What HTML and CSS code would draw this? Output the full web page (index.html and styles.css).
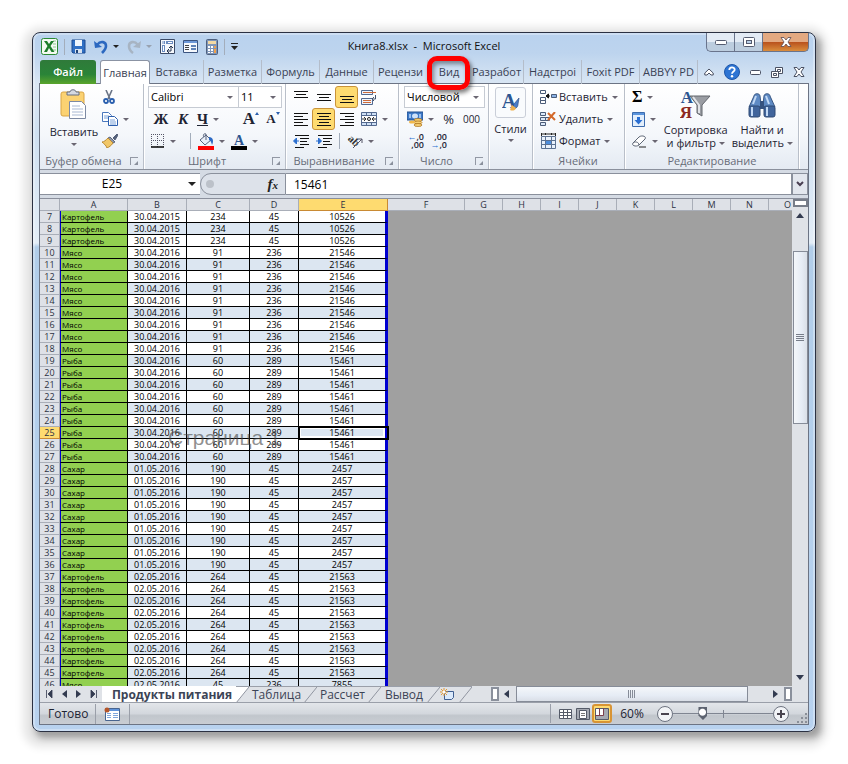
FILE: index.html
```
<!DOCTYPE html>
<html lang="ru">
<head>
  <meta charset="UTF-8">
  <meta name="viewport" content="width=device-width, initial-scale=1.0">
  <title>Книга8.xlsx - Microsoft Excel</title>
  <link rel="stylesheet" href="styles.css">
</head>
<body>
<div class="window">

  <header class="titlebar">
    <div class="quick">
      <svg width="17" height="17" viewBox="0 0 17 17"><rect x=".5" y=".5" width="16" height="16" rx="2" fill="#f4faf2" stroke="#2c8a35"/><path d="M12 3h3M12 6h3M12 9h3M12 12h3" stroke="#8dc78f"/><path d="M3 3h3l2 3 2-3h3L9.500 8l4 6h-3L8 10l-2 4H3l3.500-6z" fill="#1d7d2a"/></svg>
      <span class="divider"></span>
      <button class="tool" aria-label="Сохранить"><svg width="15" height="15" viewBox="0 0 15 15"><path d="M1 1h13v13H2l-1-1z" fill="#2f6fc4" stroke="#1d4a91"/><path d="M4 1h7v6H4z" fill="#eef5fd"/><path d="M4 10h7v4H4z" fill="#d8e2ef"/><path d="M5 11h2v3H5z" fill="#1f4378"/></svg></button>
      <button class="tool undo" aria-label="Отменить"><svg width="14" height="15" viewBox="0 0 14 15"><path d="M3 6c4-5 9-3 9 1 0 3-2 5-4 7" fill="none" stroke="#2b68c0" stroke-width="2.600"/><path d="M0 2l1 7 7-1z" fill="#2b68c0"/></svg><i class="caret dark"></i></button>
      <button class="tool undo" aria-label="Вернуть"><svg width="14" height="15" viewBox="0 0 14 15"><path d="M11 6C7 1 2 3 2 7c0 3 1 5 4 7" fill="none" stroke="#a7b4c3" stroke-width="2.600"/><path d="M14 2l-1 7-7-1z" fill="#a7b4c3"/></svg><i class="caret pale"></i></button>
      <button class="tool" aria-label="Сводная таблица"><svg width="15" height="15" viewBox="0 0 15 15"><path d="M.5.500h14v14H.5z" fill="#f6f9fd" stroke="#3b4a66"/><path d="M2 2h3v3H2zM6 2h7v3H6zM2 6h3v7H2z" fill="#6b8cc0"/><path d="M3 2v3M8 3.500h4M3.500 7v5" stroke="#fff"/><path d="M8 12h3V7M9 9l2-2 2 2M9 10l-2 2 2 2" fill="none" stroke="#26354f"/></svg></button>
      <button class="tool" aria-label="Форма"><svg width="15" height="13" viewBox="0 0 15 13"><path d="M.5.500h14v12H.5z" fill="#f6f9fd" stroke="#3b5480"/><path d="M1 1h13v2H1z" fill="#6d98d8"/><path d="M2 5.500h4M2 7.500h4M2 9.500h4" stroke="#444"/><path d="M8 5h5v2H8zM8 8h5v2H8z" fill="#5f82b7"/></svg></button>
      <button class="tool" aria-label="Калькулятор"><svg width="12" height="16" viewBox="0 0 12 16"><rect x=".5" y=".5" width="11" height="15" rx="1" fill="#7f96b9" stroke="#4e607e"/><path d="M2 2h8v3H2z" fill="#f3d9a4"/><path d="M2 7h2v2H2zM5 7h2v2H5zM2 10h2v2H2zM5 10h2v2H5zM2 13h2v1H2zM5 13h2v1H5z" fill="#fff"/><path d="M8 7h2v2H8zM8 10h2v4H8z" fill="#f0a04a"/></svg></button>
      <span class="divider"></span>
      <button class="tool more" aria-label="Настройка панели"><svg width="7" height="7" viewBox="0 0 7 7"><path d="M0 .5h7" stroke="#222"/><path d="M0 3h7L3.500 7z" fill="#222"/></svg></button>
    </div>
    <h1>Книга8.xlsx &nbsp;-&nbsp; Microsoft Excel</h1>
    <div class="winbuttons">
      <button aria-label="Свернуть"><svg width="12" height="5"><rect x=".5" y=".5" width="11" height="4" rx="1" fill="#fff" stroke="#555c70"/></svg></button>
      <button aria-label="Развернуть"><svg width="12" height="10"><rect x=".5" y=".5" width="11" height="9" rx="1" fill="#fff" stroke="#555c70"/><rect x="3.500" y="3.500" width="5" height="3" fill="#b9cfe8" stroke="#555c70"/></svg></button>
      <button class="close" aria-label="Закрыть"><svg width="12" height="10" viewBox="0 0 12 10"><path d="M1 .5h3L6 3l2-2.500h3L8 5l3 4.500H8L6 7 4 9.500H1L4 5z" fill="#fff" stroke="#5d4a50" stroke-width=".8"/></svg></button>
    </div>
  </header>

  <nav class="tabs">
    <button class="file">Файл</button>
    <button class="active">Главная</button>
    <button class="t1">Вставка</button>
    <button class="t2">Разметка</button>
    <button class="t2">Формуль</button>
    <button class="t1">Данные</button>
    <button class="t1">Рецензи</button>
    <button class="view">Вид</button>
    <button class="t1">Разработ</button>
    <button class="t2">Надстроі</button>
    <button class="t2">Foxit PDF</button>
    <button class="t2">ABBYY PD</button>
    <div class="tabtools">
      <svg width="10" height="8" viewBox="0 0 10 8"><path d="M.8 5L5 1l4.200 4v2H7L5 5 3 7H.8z" fill="#fff" stroke="#4a5163"/></svg>
      <svg width="16" height="16" viewBox="0 0 16 16"><circle cx="8" cy="8" r="7.500" fill="#2d74d3" stroke="#1d56a8"/><path d="M5.300 6c0-3.500 5.400-3.300 5.400-.3C10.700 7.500 8 7.500 8 9.800" fill="none" stroke="#fff" stroke-width="1.800"/><circle cx="8" cy="12.300" r="1.200" fill="#fff"/></svg>
      <svg width="11" height="5"><rect x=".5" y=".5" width="10" height="4" rx="1" fill="#fff" stroke="#4a5163"/></svg>
      <svg width="12" height="11" viewBox="0 0 12 11"><path d="M4.500.5h7v6h-7z" fill="#fff" stroke="#4a5163"/><path d="M6.500 2.500h3v2h-3z" fill="none" stroke="#4a5163"/><path d="M.5 4.500h7v6h-7z" fill="#fff" stroke="#4a5163"/><path d="M2.500 6.500h3v2h-3z" fill="none" stroke="#4a5163"/></svg>
      <svg width="12" height="10" viewBox="0 0 12 10"><path d="M1 .5h3L6 3l2-2.500h3L8 5l3 4.500H8L6 7 4 9.500H1L4 5z" fill="#fff" stroke="#4a5163"/></svg>
    </div>
  </nav>

  <main class="client">
    <section class="ribbon">
      <div class="group clipboard">
        <div class="body">
          <button class="big paste">
            <svg width="28" height="31" viewBox="0 0 28 31"><rect x="1" y="3" width="23" height="24" rx="2" fill="#fbd272" stroke="#d9a545"/><path d="M7 6V3h3c0-3 6-3 6 0h3v3z" fill="#d5d9e2" stroke="#666f80"/><path d="M9.500 12.500h12l4 4v13h-16z" fill="#fff" stroke="#7d8aa3"/><path d="M12 17h8M12 20h11M12 23h11M12 26h11" stroke="#a9b9d3"/></svg>
            <span>Вставить</span><i class="caret"></i>
          </button>
          <div class="stack">
            <button class="tool w38" aria-label="Вырезать"><svg width="14" height="14" viewBox="0 0 14 14"><path d="M4 0l4 9M10 0L6 9" stroke="#6a7486" stroke-width="1.600"/><circle cx="4" cy="11" r="2" fill="none" stroke="#2a5fae" stroke-width="1.800"/><circle cx="10" cy="11" r="2" fill="none" stroke="#2a5fae" stroke-width="1.800"/></svg></button>
            <button class="tool w38" aria-label="Копировать"><svg width="16" height="14" viewBox="0 0 16 14"><path d="M.5.500h6l3 3v6h-9z" fill="#fff" stroke="#4a78bd"/><path d="M2 4h5M2 6h5" stroke="#7ba3da"/><path d="M6.500 4.500h6l3 3v6h-9z" fill="#fff" stroke="#2c5fae"/><path d="M8 8h5M8 10h6M8 12h6" stroke="#7ba3da"/></svg><i class="caret"></i></button>
            <button class="tool w38" aria-label="Формат по образцу"><svg width="16" height="14" viewBox="0 0 16 14"><path d="M11 4l4-4 1 1-3 5z" fill="#54607a" stroke="#54607a"/><path d="M8 3l5 5-2 1-5-5z" fill="#8b95a8" stroke="#5a647a"/><path d="M6 4l5 5c-2 3-4 4-6 5-1-3-3-4-5-6 2 0 4-2 6-4z" fill="#f1c768" stroke="#b98934"/></svg></button>
          </div>
        </div>
        <footer>Буфер обмена<i class="launcher"></i></footer>
      </div>

      <div class="group font">
        <div class="body stack">
          <div class="row combos">
            <label class="combo face"><select aria-label="Шрифт"><option>Calibri</option></select></label>
            <label class="combo size"><select aria-label="Размер шрифта"><option>11</option></select></label>
          </div>
          <div class="row letters">
            <button class="tool serif">Ж</button>
            <button class="tool serif italic">К</button>
            <button class="tool serif w38"><u>Ч</u><i class="caret"></i></button>
            <span class="divider"></span>
            <button class="tool serif grow">A<i class="up"></i></button>
            <button class="tool serif shrink">A<i class="down"></i></button>
          </div>
          <div class="row">
            <button class="tool w38" aria-label="Границы"><svg width="14" height="14" viewBox="0 0 14 14"><path d="M0 .5h14M.5 0v13M6.500 0v13M12.500 0v13M0 6.500h14" stroke="#556" stroke-dasharray="1 1"/><path d="M0 13h13" stroke="#111" stroke-width="1.600"/></svg><i class="caret"></i></button>
            <span class="divider"></span>
            <button class="tool w33" aria-label="Цвет заливки"><svg width="16" height="17" viewBox="0 0 16 17"><path d="M2 7l6-5 5 5-6 5z" fill="#e8eef7" stroke="#56637c"/><path d="M8 7V1c-3-1-3 2-2 3" fill="none" stroke="#56637c"/><path d="M11 4c4 0 5 4 3 8-1-3-1-4-3-5z" fill="#2c69c4"/><path d="M0 13h16v4H0z" fill="#f00"/></svg><i class="caret"></i></button>
            <button class="tool w33" aria-label="Цвет текста"><svg width="16" height="17" viewBox="0 0 16 17"><text x="8" y="12" text-anchor="middle" class="letter">A</text><path d="M0 13h16v4H0z" fill="#000"/></svg><i class="caret"></i></button>
          </div>
        </div>
        <footer>Шрифт<i class="launcher"></i></footer>
      </div>

      <div class="group align">
        <div class="body stack">
          <div class="row">
            <button class="tool w23"><svg width="14" height="14"><path d="M0 1.500h14M2 4.500h10M0 7.500h14" class="ln"/></svg></button>
            <button class="tool w23"><svg width="14" height="14"><path d="M0 4.500h14M2 7.500h10M0 10.500h14" class="ln"/></svg></button>
            <button class="tool w23 on"><svg width="14" height="14"><path d="M0 6.500h14M2 9.500h10M0 12.500h14" class="ln"/></svg></button>
            <button class="tool w33"><svg width="16" height="15" viewBox="0 0 16 15"><path d="M.5.500h11v4H.5zM.5 8.500h11v6H.5z" fill="#eef4fc" stroke="#53698f"/><path d="M2 2.500h13M2 10.500h8M2 12.500h8" stroke="#cc6a3a"/><path d="M14.500 5v4h-3m1.500-2l-2 2 2 2" fill="none" stroke="#44546f"/></svg></button>
          </div>
          <div class="row">
            <button class="tool w23"><svg width="14" height="13"><path d="M0 .5h14M0 3.500h9M0 6.500h14M0 9.500h9M0 12.500h14" class="ln"/></svg></button>
            <button class="tool w23 on"><svg width="14" height="13"><path d="M0 .5h14M2 3.500h10M0 6.500h14M2 9.500h10M0 12.500h14" class="ln"/></svg></button>
            <button class="tool w23"><svg width="14" height="13"><path d="M0 .5h14M5 3.500h9M0 6.500h14M5 9.500h9M0 12.500h14" class="ln"/></svg></button>
            <button class="tool w33"><svg width="16" height="14" viewBox="0 0 16 14"><path d="M.5.500h15v13H.5zM5.500.500v3M10.500.500v3M5.500 10v3.500M10.500 10v3.500M.5 3.500h15M.5 10.500h15" fill="#cfe0f5" stroke="#53698f"/><path d="M1 4h14v6H1z" fill="#fff"/><path d="M1 7h4M11 7h4M3 5l2 2-2 2M13 5l-2 2 2 2" fill="none" stroke="#333"/><circle cx="8" cy="7" r="1.500" fill="none" stroke="#222"/></svg><i class="caret"></i></button>
          </div>
          <div class="row">
            <button class="tool w23"><svg width="16" height="13" viewBox="0 0 16 13"><path d="M2 .5h14M7 3.500h9M7 6.500h7M7 9.500h9M2 12.500h9" class="ln"/><path d="M6 6H2M3.500 3L.5 6l3 3z" fill="#2b6fd0" stroke="#2b6fd0"/></svg></button>
            <button class="tool w23"><svg width="16" height="13" viewBox="0 0 16 13"><path d="M2 .5h14M7 3.500h9M7 6.500h7M7 9.500h9M2 12.500h9" class="ln"/><path d="M0 6h3M2.500 3l3 3-3 3z" fill="#2b6fd0" stroke="#2b6fd0"/></svg></button>
            <span class="divider"></span>
            <button class="tool w38" aria-label="Ориентация"><svg width="16" height="15" viewBox="0 0 16 15"><text x="0" y="10" transform="rotate(45 6 8)" class="ab">ab</text><path d="M6 14l9-9m-4 0h4v4" fill="none" stroke="#556"/></svg><i class="caret"></i></button>
          </div>
        </div>
        <footer>Выравнивание<i class="launcher"></i></footer>
      </div>

      <div class="group number">
        <div class="body stack">
          <div class="row combos">
            <label class="combo format"><select aria-label="Числовой формат"><option>Числовой</option></select></label>
          </div>
          <div class="row">
            <button class="tool w33" aria-label="Финансовый формат"><svg width="16" height="16" viewBox="0 0 16 16"><path d="M0 1h16v8H0z" fill="#3c78c6" stroke="#245090"/><ellipse cx="8" cy="5" rx="3" ry="2.500" fill="#cfe2fa"/><path d="M2 3h2v4H2zM12 3h2v4h-2z" fill="#9cc0ee"/><ellipse cx="11" cy="9" rx="4" ry="1.500" fill="#f7cf72" stroke="#a86e1c" stroke-width=".7"/><ellipse cx="11" cy="11.500" rx="4" ry="1.500" fill="#f7cf72" stroke="#a86e1c" stroke-width=".7"/><ellipse cx="11" cy="14" rx="4" ry="1.500" fill="#f7cf72" stroke="#a86e1c" stroke-width=".7"/><ellipse cx="5" cy="11" rx="3" ry="1.500" fill="#f2b94b"/></svg><i class="caret"></i></button>
            <button class="tool w23 pct">%</button>
            <button class="tool w23 zeros">000</button>
          </div>
          <div class="row">
            <button class="tool w23 dec"><span class="blue">←</span>,0<br>,00</button>
            <button class="tool w23 dec">,00<br><span class="blue">→</span>,0</button>
          </div>
        </div>
        <footer>Число<i class="launcher"></i></footer>
      </div>

      <div class="group styles">
        <button class="big">
          <span class="frame"><svg width="18" height="20" viewBox="0 0 18 20"><text x="7" y="15" text-anchor="middle" class="letter big-a">A</text><path d="M17 5l-5 6-2 5c4 0 6-2 6-5z" fill="#4a7cc7" stroke="#2d4f88" stroke-width=".7"/><path d="M10 12l4 3c-1 3-4 3-6 2z" fill="#efb14e"/></svg></span>
          <span>Стили</span><i class="caret"></i>
        </button>
      </div>

      <div class="group cells">
        <div class="body stack">
          <button class="tool wide"><svg width="17" height="14" viewBox="0 0 17 14"><path d="M.5.500h5v3h-5zM.5 7.500h5v3h-5zM.5 10.500h5v3h-5z" fill="#fff" stroke="#4b5c78"/><path d="M11.500 4.500h5v3h-5z" fill="#8bb2e6" stroke="#4b5c78"/><path d="M6 6h4M8.500 4v4L6 6z" fill="#111" stroke="#111"/></svg><span>Вставить</span><i class="caret"></i></button>
          <button class="tool wide"><svg width="17" height="14" viewBox="0 0 17 14"><path d="M.5.500h5v3h-5zM.5 5.500h5v3h-5zM.5 10.500h5v3h-5zM5.500 5.500h4v3h-4z" fill="#dbe8f8" stroke="#4b5c78"/><path d="M8 1l7 7M15 0L8 8" stroke="#d4692a" stroke-width="2"/></svg><span>Удалить</span><i class="caret"></i></button>
          <button class="tool wide"><svg width="17" height="16" viewBox="0 0 17 16"><path d="M1.500 3.500h14v12h-14zM1.500 7.500h14M1.500 11.500h14M5.500 3.500v12M11.500 3.500v12" fill="#eaf2fc" stroke="#5d7291"/><path d="M6 8h5v3H6z" fill="#4f8edc"/><path d="M1 1h14M1.500 0v3M15.500 0v3M5.500 0v2M11.500 0v2" stroke="#222"/></svg><span>Формат</span><i class="caret"></i></button>
        </div>
        <footer>Ячейки</footer>
      </div>

      <div class="group editing">
        <div class="body">
          <div class="stack">
            <button class="tool w33 sigma">Σ<i class="caret"></i></button>
            <button class="tool w33" aria-label="Заполнить"><svg width="13" height="15" viewBox="0 0 13 15"><path d="M.5.500h12v14H.5z" fill="#e3effc" stroke="#3c6cae"/><path d="M1 1h11v2H1z" fill="#5b95dd"/><path d="M5 5h3v3h2.500l-4 4.500-4-4.500H5z" fill="#2a6fd2"/></svg><i class="caret"></i></button>
            <button class="tool w33" aria-label="Очистить"><svg width="15" height="13" viewBox="0 0 15 13"><path d="M1 8l6-6c2-2 8-1 6 2l-6 6c-2 2-8 1-6-2z" fill="#fff" stroke="#5d6675"/><path d="M1 8c2-2 6-1 6 2" fill="none" stroke="#5d6675"/><path d="M7 12h7" stroke="#222"/></svg><i class="caret"></i></button>
          </div>
          <button class="big sort">
            <svg width="31" height="29" viewBox="0 0 31 29"><text x="7" y="13" text-anchor="middle" class="letter az">A</text><text x="6" y="28" text-anchor="middle" class="letter az red">Я</text><path d="M10 6h20l-8 9v11l-5-3v-8z" fill="#9a9da3" stroke="#63666d"/><path d="M13 7l6 8v8" fill="none" stroke="#e2e4e8" stroke-width="2"/></svg>
            <span>Сортировка<br>и фильтр <i class="caret"></i></span>
          </button>
          <button class="big find">
            <svg width="28" height="27" viewBox="0 0 28 27"><path d="M6 4c0-3 6-3 6 0l1 8-1 4-11-1z" fill="#5e8ac4" stroke="#3a5884"/><path d="M16 4c0-3 6-3 6 0l5 11-11 1-1-4z" fill="#5e8ac4" stroke="#3a5884"/><rect x="1" y="14" width="11" height="11" rx="2" fill="#41659c" stroke="#2f4a75"/><rect x="16" y="14" width="11" height="11" rx="2" fill="#41659c" stroke="#2f4a75"/><path d="M12 9h4v8h-4z" fill="#35527f"/><path d="M4 15v9M19 15v9M8 4L5 12M18 4l3 8" stroke="#c3daf6" stroke-width="2"/></svg>
            <span>Найти и<br>выделить <i class="caret"></i></span>
          </button>
        </div>
        <footer>Редактирование</footer>
      </div>
    </section>

    <section class="formulabar">
      <label class="namebox"><input type="text" value="E25" aria-label="Имя"><i class="caret dark wide-caret"></i></label>
      <div class="fx"><span class="knob"></span><em>f<small>x</small></em></div>
      <input class="formula" type="text" value="15461" aria-label="Строка формул">
      <button class="expand" aria-label="Развернуть строку формул"><svg width="8" height="6"><path d="M1 1l3 3 3-3" fill="none" stroke="#4a3f52" stroke-width="2"/></svg></button>
    </section>

    <section class="sheet">
      <div class="grid">
        <table>
          <colgroup><col class="c0"><col class="ca"><col class="cb"><col class="cc"><col class="cd"><col class="ce"><col class="cf"><col span="9" class="cx"></colgroup>
          <thead>
            <tr><th class="corner"></th><th>A</th><th>B</th><th>C</th><th>D</th><th class="sel">E</th><th>F</th><th>G</th><th>H</th><th>I</th><th>J</th><th>K</th><th>L</th><th>M</th><th>N</th><th>O</th></tr>
          </thead>
          <tbody id="rows"></tbody>
        </table>
        <div class="watermark">Страница 1</div>
      </div>
      <div class="vscroll">
        <span class="split"></span>
        <span class="arrow arrow-up"></span>
        <span class="vthumb"></span>
        <span class="arrow arrow-down"></span>
      </div>
    </section>

    <section class="sheetbar">
      <div class="navs">
        <svg width="7" height="8"><path d="M.5 0v8M6 0v8L2 4z" fill="#333b50" stroke="#333b50" stroke-width=".8"/></svg>
        <svg width="5" height="8"><path d="M5 0v8L0 4z" fill="#333b50"/></svg>
        <svg width="5" height="8"><path d="M0 0v8l5-4z" fill="#333b50"/></svg>
        <svg width="7" height="8"><path d="M6.500 0v8M1 0v8l4-4z" fill="#333b50" stroke="#333b50" stroke-width=".8"/></svg>
      </div>
      <button class="sheettab s1">Продукты питания</button>
      <svg class="slant" width="13" height="16"><path d="M0 0h13L0 16z" fill="#fff"/><path d="M0 16L13 0" stroke="#9095a0"/></svg>
      <button class="sheettab s2">Таблица</button>
      <svg class="slant" width="13" height="16"><path d="M0 16L13 0" stroke="#9095a0"/></svg>
      <button class="sheettab s3">Рассчет</button>
      <svg class="slant" width="13" height="16"><path d="M0 16L13 0" stroke="#9095a0"/></svg>
      <button class="sheettab s4">Вывод</button>
      <svg class="slant" width="13" height="16"><path d="M0 16L13 0" stroke="#9095a0"/></svg>
      <button class="sheettab s5" aria-label="Вставить лист"><svg width="15" height="13" viewBox="0 0 15 13"><path d="M4.500 3.500h9v6l-2 2h-7z" fill="#dceafb" stroke="#3f5f92"/><path d="M4 0v8M0 4h8M1 1l6 6M7 1L1 7" stroke="#e49a35"/><circle cx="4" cy="4" r="1.500" fill="#fff"/></svg></button>
      <svg class="slant" width="13" height="16"><path d="M0 16L13 0" stroke="#9095a0"/></svg>
      <div class="hscroll">
        <span class="hsplit"></span>
        <span class="arrow arrow-left"></span>
        <span class="hthumb"></span>
        <span class="arrow arrow-right"></span>
        <span class="hsplit"></span>
      </div>
    </section>

    <footer class="status">
      <span class="ready">Готово</span>
      <span class="macro"><svg width="16" height="14" viewBox="0 0 16 14"><path d="M1.500 1.500h14v12h-14z" fill="#fff" stroke="#49658f"/><path d="M2 2h13v2H2z" fill="#5f93da"/><path d="M3 6.500h4M3 8.500h4M3 10.500h4M9 6.500h5M9 8.500h5M9 10.500h5" stroke="#7fa6dc"/><circle cx="3" cy="3" r="2.500" fill="#b5572b"/></svg></span>
      <div class="views">
        <button aria-label="Обычный"><svg width="13" height="10"><path d="M.5.500h12v9H.5zM.5 3.500h12M.5 6.500h12M4.500.500v9M8.500.500v9" fill="#fff" stroke="#555b68"/></svg></button>
        <button aria-label="Разметка страницы"><svg width="14" height="12"><path d="M.5.500h13v11H.5z" fill="#a5a9b2" stroke="#555b68"/><path d="M3.500 2.500h7v8h-7z" fill="#fff" stroke="#555b68"/><path d="M5 5.500h4M5 7.500h4" stroke="#777"/></svg></button>
        <button class="on" aria-label="Страничный режим"><svg width="14" height="12"><path d="M.5.500h13v11H.5z" fill="#a5a9b2" stroke="#555b68"/><path d="M1 1h3v6H1zM5 1h3v6H5z" fill="#fff"/><path d="M4.500 0v7.500M8.500 0v7.500H0" fill="none" stroke="#7b3f4d"/></svg></button>
      </div>
      <button class="percent">60%</button>
      <button class="round minus" aria-label="Уменьшить"><svg width="8" height="8"><path d="M0 4h8" stroke="#4a4550" stroke-width="2"/></svg></button>
      <input class="zoom" type="range" min="0" max="100" value="28" aria-label="Масштаб">
      <button class="round plus" aria-label="Увеличить"><svg width="8" height="8"><path d="M0 4h8M4 0v8" stroke="#4a4550" stroke-width="2"/></svg></button>
      <svg class="grip" width="10" height="10"><path d="M8 0h2v2H8zM4 4h2v2H4zM8 4h2v2H8zM0 8h2v2H0zM4 8h2v2H4zM8 8h2v2H8z" fill="#8a8f98"/></svg>
    </footer>
  </main>
</div>
<script src="script.js"></script>
</body>
</html>
```

FILE: styles.css
```
*,
*::after {
  box-sizing: border-box;
}
body {
  margin: 0;
  padding: 32px;
  height: 100vh;
  background: #fff;
  font-family: "Open Sans", "Noto Sans", sans-serif;
  font-size: 12px;
  line-height: 14px;
  color: #1e2433;
}
button {
  padding: 0;
  border: none;
  background: none;
  font: inherit;
  color: inherit;
}
svg {
  display: block;
  flex: none;
}
.window {
  display: flex;
  flex-direction: column;
  height: 100%;
  padding: 0 6px 6px;
  border: 1px solid #2b3142;
  border-radius: 8px;
  background: linear-gradient(#b9d2ee 0, #bdd4ee 20px, #dbe7f4 52px, #cfe0f1 100px, #e3edf7 210px, #b1cde9 214px, #b8d2ef 100%);
  box-shadow: 0 0 0 2px rgba(255,255,255,.3) inset, 4px 5px 6px 1px rgba(0,0,0,.3), 1px 5px 8px 10px rgba(0,0,0,.1);
}

/* title bar */
.titlebar {
  display: grid;
  grid-template-columns: 1fr auto 1fr;
  height: 27px;
  flex: none;
}
.titlebar h1 {
  margin: 0;
  padding-top: 6px;
  font-size: 11px;
  font-weight: normal;
  color: #111;
}
.quick {
  display: flex;
  align-items: center;
  gap: 8px;
  padding-left: 2px;
}
.quick .divider {
  margin: 0 -2px;
}
.quick .undo {
  gap: 5px;
}
.quick .tool {
  height: 20px;
}
.divider {
  width: 1px;
  height: 16px;
  margin: 0 4px;
  background: #a3adbb;
}
.winbuttons {
  display: flex;
  justify-self: end;
  height: 19px;
}
.winbuttons button {
  display: flex;
  align-items: center;
  justify-content: center;
  width: 28px;
  border: 1px solid #69748c;
  border-top: none;
  border-right: none;
  background: linear-gradient(#e3ebf5 50%, #bccddf 50%);
}
.winbuttons button:first-child {
  border-radius: 0 0 0 5px;
}
.winbuttons .close {
  width: 47px;
  border-right: 1px solid #69748c;
  border-radius: 0 0 5px 0;
  background: linear-gradient(#e3a981 50%, #b9501c 50%, #d98d3c);
}

/* tabs */
.tabs {
  display: flex;
  height: 24px;
  flex: none;
  margin-bottom: -1px;
  padding-left: 1px;
  font-size: 11px;
  color: #3a4254;
  z-index: 1;
}
.tabs button {
  flex: none;
  overflow: hidden;
  white-space: nowrap;
  border-right: 1px solid #b4bdca;
}
.tabs .file {
  width: 56px;
  margin-right: 4px;
  border: none;
  border-radius: 3px 3px 0 0;
  background: linear-gradient(#2f7a3a, #2a8438 60%, #5aa52c);
  color: #fff;
  font-weight: 600;
}
.tabs .active {
  width: 50px;
  border: 1px solid #8b93a3;
  border-bottom: none;
  border-radius: 3px 3px 0 0;
  background: #fff;
}
.tabs .t1 {
  width: 54px;
}
.tabs .t2 {
  width: 58px;
}
.tabs .view {
  position: relative;
  width: 42px;
  overflow: visible;
  border: none;
}
.tabs .view::after {
  content: "";
  position: absolute;
  top: -4px;
  left: -1px;
  width: 43px;
  height: 34px;
  border: 5px solid #f00;
  border-radius: 10px;
  box-shadow: 2px 3px 4px rgba(0,0,0,.5), inset 2px 3px 4px rgba(0,0,0,.4);
}
.tabtools {
  display: flex;
  flex: 1;
  align-items: center;
  justify-content: space-between;
  padding: 0 4px 0 6px;
}

/* ribbon */
.client {
  display: flex;
  flex-direction: column;
  flex: 1;
  min-height: 0;
  border: 1px solid #6c7484;
}
.ribbon {
  display: flex;
  flex: none;
  height: 86px;
  border-bottom: 1px solid #8a909c;
  background: linear-gradient(#fff, #f4f7fb 60%, #e4eaf2);
}
.group {
  display: flex;
  flex-direction: column;
  padding: 2px 3px 0;
  border-right: 1px solid #b9bfc9;
  box-shadow: 1px 0 #fff;
}
.clipboard {
  width: 104px;
}
.font {
  width: 142px;
}
.align {
  width: 113px;
}
.number {
  width: 90px;
}
.styles {
  width: 44px;
}
.cells {
  width: 92px;
}
.editing {
  width: 174px;
}
.body {
  display: flex;
  height: 68px;
}
.stack {
  display: flex;
  flex-direction: column;
}
.row {
  display: flex;
  align-items: center;
  height: 22px;
}
.group footer {
  position: relative;
  padding-right: 16px;
  text-align: center;
  white-space: nowrap;
  font-size: 11px;
  line-height: 14px;
  color: #676c78;
}
.cells footer,
.editing footer {
  padding: 0;
}
.launcher {
  position: absolute;
  right: 2px;
  top: 3px;
  width: 8px;
  height: 8px;
  border-top: 1px solid #9298a4;
  border-left: 1px solid #9298a4;
}
.launcher::after {
  content: "";
  position: absolute;
  right: 0;
  bottom: 0;
  border: 2px solid #8a909c;
  border-top-color: transparent;
  border-left-color: transparent;
}
.tool {
  display: flex;
  flex: none;
  align-items: center;
  justify-content: center;
  gap: 5px;
  height: 22px;
}
.row .tool {
  min-width: 22px;
}
.stack .w38 {
  width: 38px;
  justify-content: flex-start;
  padding-left: 3px;
}
.stack .w33 {
  width: 33px;
  justify-content: flex-start;
  padding-left: 3px;
}
.stack .w23 {
  width: 23px;
}
.on {
  border: 1px solid #c99339;
  border-radius: 3px;
  background: #fedb70;
}
.caret {
  flex: none;
  display: inline-block;
  border: 3px solid transparent;
  border-top-color: #6a6672;
  border-bottom: none;
}
.caret.dark {
  border-top-color: #222;
}
.caret.pale {
  border-top-color: #98a2b0;
}
.big {
  display: flex;
  flex-direction: column;
  align-items: center;
  font-size: 11px;
  line-height: 13px;
}
.paste {
  width: 61px;
  padding: 3px 0 0 4px;
  gap: 5px;
}
.clipboard .stack {
  padding-left: 1px;
}
.clipboard .stack .tool {
  padding-left: 0;
}
.combo {
  position: relative;
  height: 22px;
  border: 1px solid #c6cbd3;
  background: #fff;
}
.combo + .combo {
  border-left: none;
}
.combo::after {
  content: "";
  position: absolute;
  right: 5px;
  top: 9px;
  border: 3px solid transparent;
  border-top-color: #6a6672;
  border-bottom: none;
}
.combo select {
  appearance: none;
  width: 100%;
  height: 100%;
  padding: 0 2px;
  border: none;
  background: none;
  font: inherit;
  font-size: 11px;
  color: #000;
}
.face {
  width: 91px;
}
.size {
  width: 43px;
}
.format {
  width: 81px;
}
.font {
  padding-left: 4px;
}
.letters {
  padding-left: 2px;
}
.number {
  padding-left: 5px;
}
.serif {
  font-family: "Liberation Serif", serif;
  font-size: 15px;
  font-weight: bold;
}
.italic {
  font-style: italic;
}
.grow {
  font-size: 17px;
}
.shrink {
  font-size: 13px;
}
.grow,
.shrink {
  gap: 0;
  align-items: center;
}
.up,
.down {
  align-self: flex-start;
  margin-top: 4px;
  border: 2px solid transparent;
}
.up {
  border-bottom: 3px solid #2a5fae;
  border-top: none;
}
.down {
  border-top: 3px solid #2a5fae;
  border-bottom: none;
}
.ln {
  stroke: #111;
}
.letter {
  font: bold 14px "Liberation Serif", serif;
  fill: #2c5590;
}
.big-a {
  font-size: 20px;
}
.az {
  font-size: 17px;
}
.red {
  fill: #8c2a22;
}
.ab {
  font: bold 11px "Liberation Serif", serif;
  fill: #333;
}
.pct {
  font-size: 13px;
}
.zeros {
  font-size: 10px;
}
.row .dec {
  display: block;
  text-align: right;
  font-size: 9px;
  font-weight: 600;
  line-height: 8px;
  height: 18px;
  padding-right: 3px;
}
.blue {
  color: #2b6fd0;
}
.styles .big {
  gap: 4px;
  padding-top: 1px;
}
.frame {
  display: flex;
  align-items: center;
  justify-content: center;
  width: 31px;
  height: 31px;
  border: 1px solid #c9ced8;
  border-radius: 3px;
  background: #f9fbfd;
}
.wide {
  justify-content: flex-start;
  padding-left: 5px;
  gap: 2px;
  font-size: 11px;
}
.wide .caret {
  margin-left: 2px;
}
.cells {
  padding-left: 2px;
}
.sigma {
  font: bold 16px "Liberation Serif", serif;
  color: #000;
}
.editing {
  padding-left: 4px;
}
.sort {
  width: 68px;
  padding-top: 4px;
  gap: 4px;
}
.find {
  width: 66px;
  padding-top: 6px;
  gap: 4px;
}
.find span,
.sort span {
  white-space: nowrap;
}
.find .caret,
.sort .caret {
  vertical-align: 2px;
}

/* formula bar */
.formulabar {
  display: flex;
  flex: none;
  height: 28px;
  padding: 3px 0;
  background: #d5dbe4;
}
.formulabar > * {
  height: 22px;
  border: 1px solid #8a909c;
}
.namebox {
  display: flex;
  align-items: center;
  width: 160px;
  padding-right: 4px;
  background: #fff;
  border-left: none;
  border-right: none;
}
.formulabar input {
  min-width: 0;
  padding: 0;
  font: inherit;
  color: #000;
  outline: none;
}
.namebox input {
  flex: 1;
  border: none;
  text-align: center;
  text-indent: -4px;
}
.caret.wide-caret {
  border-width: 4px 4px 0;
}
.fx {
  display: flex;
  align-items: center;
  justify-content: space-between;
  width: 86px;
  padding: 0 7px 0 5px;
  border-radius: 11px 0 0 11px;
  background: #dde2ea;
}
.knob {
  width: 8px;
  height: 8px;
  border-radius: 50%;
  background: #bcc1c9;
}
.fx em {
  font: italic bold 15px "Liberation Serif", serif;
  color: #222;
}
.fx small {
  font-size: 11px;
}
.formulabar .formula {
  flex: 1;
  padding-left: 8px;
  border-left: none;
  background: #fff;
}
.expand {
  display: flex;
  align-items: center;
  justify-content: center;
  width: 16px;
  background: #e3e7ee;
}

/* sheet */
.sheet {
  display: flex;
  flex: 1;
  min-height: 0;
  border-top: 1px solid #8a8f9c;
}
.grid {
  position: relative;
  flex: 1;
  min-width: 0;
  overflow: hidden;
  background: #a0a0a0;
}
table {
  table-layout: fixed;
  width: 767px;
  border-spacing: 0;
  font-size: 9px;
  line-height: 11px;
  color: #000;
}
.c0 { width: 20px; }
.ca { width: 68px; }
.cb { width: 59px; }
.cc { width: 63px; }
.cd { width: 49px; }
.ce { width: 89px; }
.cf { width: 77px; }
.cx { width: 38px; }
th,
td {
  height: 12px;
  padding: 0;
  overflow: hidden;
  white-space: nowrap;
  text-align: center;
  font-weight: normal;
}
th {
  border-right: 1px solid #a9aeb8;
  border-bottom: 1px solid #a9aeb8;
  background: #dee1e7;
  color: #2b3142;
}
td {
  border-right: 1px solid #000;
  border-bottom: 1px solid #000;
  background: #fff;
}
.band td {
  background: #dce6f1;
}
tr td.name {
  border-left: 1px solid #0000d0;
  padding-left: 1px;
  background: #92d050;
  text-align: left;
  font-size: 8px;
}
td.last {
  border-right: 3px solid #0000d0;
}
tr td.void {
  border: none;
  background: #a0a0a0;
}
th.sel,
th.current {
  border-color: #c98a33;
  background: #fedb70;
}
td.cursor {
  outline: 2px solid #000;
  outline-offset: -1px;
  box-shadow: inset 0 0 0 2px #fff;
}
.watermark {
  position: absolute;
  left: 128px;
  top: 227px;
  font: 21px/24px "Liberation Sans", Arial, sans-serif;
  color: rgba(70,70,70,.6);
}
.vscroll {
  display: flex;
  flex-direction: column;
  align-items: center;
  width: 16px;
  background: #dfe2e7;
}
.split {
  width: 15px;
  height: 8px;
  border: 2px solid #777d89;
  background: #fff;
}
.arrow {
  border: 4px solid transparent;
}
.arrow-up {
  margin: 6px 0 33px;
  border-bottom: 5px solid #333b50;
  border-top: none;
}
.arrow-down {
  margin: auto 0 6px;
  border-top: 5px solid #333b50;
  border-bottom: none;
}
.vthumb,
.hthumb {
  display: flex;
  align-items: center;
  justify-content: center;
  border: 1px solid #868c98;
}
.vthumb {
  width: 15px;
  height: 173px;
  background: linear-gradient(90deg, #f4f7fa, #e6ecf5 60%, #dadfe7);
}
.vthumb::after {
  content: "";
  width: 8px;
  height: 7px;
  background: repeating-linear-gradient(#777d89 0 1px, transparent 1px 2px);
}

/* sheet tabs */
.sheetbar {
  display: flex;
  flex: none;
  height: 17px;
  border-bottom: 1px solid #9a9fa9;
  background: #dfe2e7;
  color: #3c4456;
}
.navs {
  display: flex;
  align-items: center;
  justify-content: space-between;
  width: 62px;
  padding: 0 5px 0 6px;
}
.sheettab {
  flex: none;
  border-top: 1px solid #9a9fa9;
  white-space: nowrap;
}
.s1 {
  width: 134px;
  padding-left: 6px;
  border-top-color: #fff;
  background: #fff;
  font-weight: bold;
}
.s2 {
  width: 55px;
}
.s3 {
  width: 51px;
}
.s4 {
  width: 46px;
}
.s5 {
  width: 19px;
}
.slant {
  border-top: 1px solid #9a9fa9;
}
.hscroll {
  display: flex;
  flex: 1;
  align-items: center;
  margin-left: 19px;
  padding-right: 16px;
}
.hsplit {
  width: 8px;
  height: 14px;
  border: 2px solid #8a909c;
  background: #fff;
}
.arrow-left {
  margin: 0 7px 0 5px;
  border-right: 5px solid #333b50;
  border-left: none;
}
.arrow-right {
  margin: 0 6px 0 25px;
  border-left: 5px solid #333b50;
  border-right: none;
}
.hthumb {
  flex: 1;
  height: 16px;
  background: linear-gradient(#f4f7fa, #e6ecf5 60%, #dadfe7);
}
.hthumb::after {
  content: "";
  width: 8px;
  height: 8px;
  background: repeating-linear-gradient(90deg, #868c98 0 1px, transparent 1px 2px);
}

/* status bar */
.status {
  display: flex;
  flex: none;
  align-items: center;
  height: 21px;
  background: linear-gradient(#e3e6ea, #d3d7dd 50%, #c1c6cc 60%, #c9cdd3);
}
.ready {
  width: 55px;
  padding-left: 8px;
}
.macro {
  padding: 3px 9px 3px 8px;
  border-left: 1px solid #9a9fa9;
  border-right: 1px solid #9a9fa9;
}
.views {
  display: flex;
  align-items: center;
  margin-left: auto;
  padding-left: 5px;
  border-left: 1px solid #9a9fa9;
}
.views button {
  display: flex;
  align-items: center;
  justify-content: center;
  width: 18px;
  height: 19px;
}
.views .on {
  width: 20px;
  border: 2px solid #d89434;
}
.percent {
  width: 40px;
}
.round {
  display: flex;
  align-items: center;
  justify-content: center;
  width: 16px;
  height: 16px;
  border: 1px solid #6d7380;
  border-radius: 50%;
  background: #f2f4f7;
}
.minus {
  margin-left: 5px;
}
.zoom {
  appearance: none;
  width: 100px;
  height: 16px;
  margin: 0;
  background: linear-gradient(#7f8591, #7f8591) center / 100% 1px no-repeat, linear-gradient(#7f8591, #7f8591) center / 1px 8px no-repeat;
}
.zoom::-webkit-slider-thumb {
  appearance: none;
  width: 9px;
  height: 13px;
  background: radial-gradient(circle at 50% 40%, #fff 3px, #5d6370 4px);
  clip-path: polygon(0 0, 100% 0, 100% 65%, 50% 100%, 0 65%);
}
.grip {
  align-self: flex-end;
  margin: 0 1px 1px 8px;
}
```

FILE: script.js
```
// first row, last row, product, date, price, count, total
const blocks = [
  [7, 9, "Картофель", "30.04.2015", 234, 45, 10526],
  [10, 18, "Мясо", "30.04.2016", 91, 236, 21546],
  [19, 27, "Рыба", "30.04.2016", 60, 289, 15461],
  [28, 36, "Сахар", "01.05.2016", 190, 45, 2457],
  [37, 45, "Картофель", "02.05.2016", 264, 45, 21563],
  [46, 46, "Мясо", "02.05.2016", 45, 236, 7855]
];
const banded = n => {
  if (n < 10) return n === 8;
  if (n >= 28 && n <= 36 || n === 46) return n % 2 === 0;
  return n % 2 === 1;
};

let html = "";
for (const [from, to, name, date, price, count, total] of blocks) {
  for (let n = from; n <= to; n++) {
    const active = n === 25;
    html += `<tr class="${banded(n) ? "band" : ""}">
      <th class="${active ? "current" : ""}">${n}</th>
      <td class="name">${name}</td><td>${date}</td><td>${price}</td><td>${count}</td>
      <td class="last ${active ? "cursor" : ""}">${total}</td>
      <td class="void" colspan="10"></td>
    </tr>`;
  }
}
document.getElementById("rows").innerHTML = html;
```
